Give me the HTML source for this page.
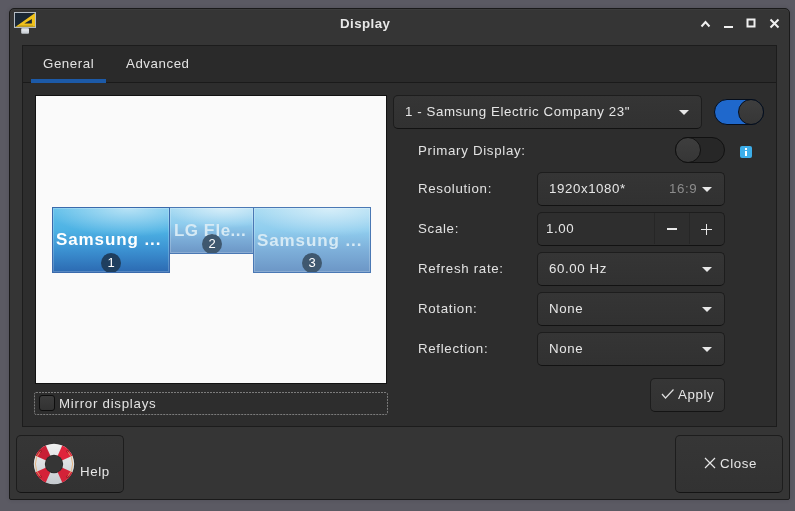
<!DOCTYPE html>
<html><head><meta charset="utf-8">
<style>
*{margin:0;padding:0;box-sizing:border-box}
html,body{width:795px;height:511px;overflow:hidden;background:#5b5a63;font-family:"Liberation Sans",sans-serif;font-size:13.3px;color:#e6e6e6}
.abs{position:absolute}
#root{position:absolute;left:0;top:0;width:795px;height:511px;will-change:transform}
#win{position:absolute;left:9px;top:8px;width:781px;height:492px;background:#353535;border:1px solid #1a1a1a;border-radius:5px 5px 2px 2px;box-shadow:0 0 4px rgba(0,0,0,0.12),inset 0 1px 0 rgba(255,255,255,0.04)}
#title{position:absolute;left:340px;top:16px;font-weight:bold;font-size:13.3px;letter-spacing:0.45px;color:#e8e8e8;line-height:16px}
#nb{position:absolute;left:22px;top:45px;width:755px;height:382px;background:#2d2d2d;border:1px solid #1c1c1c}
#tabsep{position:absolute;left:23px;top:82px;width:753px;height:1px;background:#1a1a1a}
#tabhdr{position:absolute;left:23px;top:46px;width:753px;height:36px;background:#2a2a2a}
.tab{position:absolute;line-height:16px;color:#e2e2e2;letter-spacing:0.55px!important}
#tabline{position:absolute;left:31px;top:79px;width:75px;height:4px;background:#1c5aa8}
#preview{position:absolute;left:35px;top:95px;width:352px;height:289px;background:#fafafa;border:1px solid #121212}
.lbl{position:absolute;left:418px;line-height:16px;color:#e2e2e2;letter-spacing:0.68px}
.combo{position:absolute;left:537px;width:188px;height:34px;background:linear-gradient(#353535,#313131);border:1px solid #1d1d1d;border-bottom-color:#121212;border-radius:5px}
.ctext{position:absolute;left:11px;top:8px;line-height:16px;color:#e6e6e6;letter-spacing:0.58px}
.arrow{position:absolute;left:164px;top:14px;width:0;height:0;border-left:5px solid transparent;border-right:5px solid transparent;border-top:5px solid #e8e8e8}
.btn{position:absolute;background:linear-gradient(#363636,#323232);border:1px solid #1d1d1d;border-bottom-color:#141414;border-radius:5px}
.mon{position:absolute;border:1px solid #2e62a8;overflow:hidden}
.badge{position:absolute;width:20px;height:20px;border-radius:50%;color:#fff;font-size:13px;text-align:center;line-height:20px}
.mtext{position:absolute;font-weight:bold;font-size:17px;letter-spacing:0.9px;line-height:18px;white-space:nowrap}
.m1{background:linear-gradient(#62c0ea 0%,#4db2e4 35%,#3c92d2 65%,#2c6ab2 100%);border-color:#3a6aac}
.m2{background:linear-gradient(#a6daf2 0%,#8fcdee 35%,#7eb0da 65%,#6c96c6 100%);border-color:#4a78b4}
.gl{position:absolute;left:0;top:0;width:100%;height:100%;background:radial-gradient(ellipse 70% 45% at 65% 0%,rgba(255,255,255,0.55),rgba(255,255,255,0) 100%);box-shadow:inset 0 0 0 1px rgba(255,255,255,0.2)}
</style></head><body><div id="root">
<div id="win"></div>
<!-- app icon -->
<svg class="abs" style="left:14px;top:12px" width="23" height="23" viewBox="0 0 23 23">
  <defs><linearGradient id="st" x1="0" y1="0" x2="0" y2="1"><stop offset="0" stop-color="#aeb6be"/><stop offset="0.3" stop-color="#e4e8ec"/><stop offset="1" stop-color="#c0c6cc"/></linearGradient></defs>
  <rect x="7.2" y="16" width="7.8" height="5.8" rx="1" fill="url(#st)"/>
  <rect x="0" y="0" width="22" height="16" fill="#b4bcc4"/>
  <rect x="1" y="1" width="20" height="13.8" fill="#1a2734"/>
  <polygon points="21,1 21,14.8 1.6,14.8" fill="#f0c21c"/>
  <polygon points="17.9,7 17.9,11.4 10.3,11.4" fill="#1a2734"/>
  <path d="M6,14.2 v-0.9 M8,14.2 v-0.9 M10,14.2 v-0.9 M12,14.2 v-0.9 M14,14.2 v-0.9 M16,14.2 v-0.9 M18,14.2 v-0.9" stroke="#7a5e10" stroke-width="0.7"/>
</svg>
<div id="title">Display</div>
<!-- window controls -->
<svg class="abs" style="left:698px;top:16px" width="86" height="16" viewBox="0 0 86 16">
  <polyline points="3.5,10.5 7.5,6 11.5,10.5" fill="none" stroke="#f0f0f0" stroke-width="2"/>
  <rect x="26" y="10" width="9" height="2" fill="#f0f0f0"/>
  <rect x="49.5" y="3.5" width="7" height="7" fill="none" stroke="#f0f0f0" stroke-width="2"/>
  <path d="M72.5,3.5 L80.5,11.5 M80.5,3.5 L72.5,11.5" stroke="#f0f0f0" stroke-width="2"/>
</svg>

<div id="nb"></div>
<div id="tabhdr"></div>
<div id="tabsep"></div>
<div class="tab" style="left:43px;top:56px;letter-spacing:0.5px">General</div>
<div class="tab" style="left:126px;top:56px;letter-spacing:0.5px">Advanced</div>
<div id="tabline"></div>

<div id="preview"></div>
<!-- monitors -->
<div class="mon m2" style="left:253px;top:207px;width:118px;height:66px">
  <div class="gl"></div>
  <div class="mtext" style="left:3px;top:23.5px;color:#d6eaf5">Samsung ...</div>
  <div class="badge" style="left:48px;top:44.5px;background:#3f586f">3</div>
</div>
<div class="mon m2" style="left:169px;top:207px;width:85px;height:47px">
  <div class="gl"></div>
  <div class="mtext" style="left:4px;top:14px;color:#d6eaf5;letter-spacing:0.45px">LG Ele...</div>
  <div class="badge" style="left:32px;top:26px;background:#3f586f">2</div>
</div>
<div class="mon m1" style="left:52px;top:207px;width:118px;height:66px">
  <div class="gl"></div>
  <div class="mtext" style="left:3px;top:23px;color:#ffffff">Samsung ...</div>
  <div class="badge" style="left:48px;top:44.5px;background:#1f3f5f">1</div>
</div>
<!-- mirror -->
<svg class="abs" style="left:0;top:0" width="795" height="511"><rect x="34.5" y="392.5" width="353" height="22" rx="1.5" fill="none" stroke="#7c7c7c" stroke-width="1" stroke-dasharray="2 1"/></svg>
<div class="abs" style="left:39px;top:395px;width:16px;height:16px;border:1.5px solid #0e0e0e;border-radius:3px;background:linear-gradient(#3c3c3c,#323232)"></div>
<div class="abs" style="left:59px;top:396px;line-height:16px;letter-spacing:0.73px;color:#e2e2e2">Mirror displays</div>

<!-- display selector -->
<div class="combo" style="left:393px;top:95px;width:309px;height:34px">
  <div class="ctext">1 - Samsung Electric Company 23"</div>
  <div class="arrow" style="left:285px"></div>
</div>
<!-- toggle on -->
<div class="abs" style="left:714px;top:99px;width:50px;height:26px;border-radius:13px;background:#1f68cc;border:1px solid #050e1c"></div>
<div class="abs" style="left:738px;top:99px;width:26px;height:26px;border-radius:50%;background:linear-gradient(#3e3e3e,#363636);border:1px solid #050e1c"></div>

<div class="lbl" style="top:143px">Primary Display:</div>
<!-- toggle off -->
<div class="abs" style="left:675px;top:137px;width:50px;height:26px;border-radius:13px;background:#272727;border:1px solid #111111"></div>
<div class="abs" style="left:675px;top:137px;width:26px;height:26px;border-radius:50%;background:linear-gradient(#3e3e3e,#363636);border:1px solid #111111"></div>
<!-- info -->
<div class="abs" style="left:740px;top:146px;width:12px;height:12px;border-radius:2px;background:#3daee9"></div>
<div class="abs" style="left:745px;top:148px;width:2px;height:2px;background:#fff"></div>
<div class="abs" style="left:745px;top:151px;width:2px;height:5px;background:#fff"></div>

<div class="lbl" style="top:181px">Resolution:</div>
<div class="combo" style="top:172px">
  <div class="ctext">1920x1080*</div>
  <div class="ctext" style="left:131px;color:#8c8c8c">16:9</div>
  <div class="arrow"></div>
</div>

<div class="lbl" style="top:221px">Scale:</div>
<div class="combo" style="top:212px;background:#2e2e2e">
  <div class="ctext" style="left:8px">1.00</div>
  <div class="abs" style="left:116px;top:0;width:1px;height:31px;background:#262626"></div>
  <div class="abs" style="left:151px;top:0;width:1px;height:31px;background:#262626"></div>
  <div class="abs" style="left:129px;top:15px;width:10px;height:2px;background:#e8e8e8"></div>
  <div class="abs" style="left:163px;top:16px;width:11px;height:1px;background:#e8e8e8"></div>
  <div class="abs" style="left:168px;top:11px;width:1px;height:11px;background:#e8e8e8"></div>
</div>

<div class="lbl" style="top:261px">Refresh rate:</div>
<div class="combo" style="top:252px">
  <div class="ctext">60.00 Hz</div>
  <div class="arrow"></div>
</div>

<div class="lbl" style="top:301px">Rotation:</div>
<div class="combo" style="top:292px">
  <div class="ctext">None</div>
  <div class="arrow"></div>
</div>

<div class="lbl" style="top:341px">Reflection:</div>
<div class="combo" style="top:332px">
  <div class="ctext">None</div>
  <div class="arrow"></div>
</div>

<!-- apply -->
<div class="btn" style="left:650px;top:378px;width:75px;height:34px"></div>
<svg class="abs" style="left:660px;top:388px" width="16" height="12" viewBox="0 0 16 12">
  <polyline points="2,6 5.5,10 13.5,1.5" fill="none" stroke="#dedede" stroke-width="1.2"/>
</svg>
<div class="abs" style="left:678px;top:387px;line-height:16px;letter-spacing:0.6px;color:#e6e6e6">Apply</div>

<!-- help -->
<div class="btn" style="left:16px;top:435px;width:108px;height:58px"></div>
<svg class="abs" style="left:32px;top:442px" width="44" height="44" viewBox="0 0 44 44">
  <defs>
    <linearGradient id="wg" x1="0" y1="0" x2="0" y2="1"><stop offset="0" stop-color="#f0f0f0"/><stop offset="0.5" stop-color="#dcdfe2"/><stop offset="1" stop-color="#c4c9ce"/></linearGradient>
  </defs>
  <circle cx="22" cy="22" r="20.8" fill="#262626" opacity="0.5"/>
  <circle cx="22" cy="22" r="20.2" fill="url(#wg)"/>
  <path d="M22,22 L30.22,3.55 A20.2,20.2 0 0 1 40.45,13.78 Z" fill="#e0243c"/><path d="M22,22 L40.45,30.22 A20.2,20.2 0 0 1 30.22,40.45 Z" fill="#d42238"/><path d="M22,22 L13.78,40.45 A20.2,20.2 0 0 1 3.55,30.22 Z" fill="#d42238"/><path d="M22,22 L3.55,13.78 A20.2,20.2 0 0 1 13.78,3.55 Z" fill="#c81f35"/>
  <path d="M35.60,9.31 A18.6,18.6 0 0 1 35.60,34.69 M8.40,34.69 A18.6,18.6 0 0 1 8.40,9.31" fill="none" stroke="#e6a868" stroke-width="0.8"/>
  <circle cx="35.60" cy="9.31" r="1" fill="none" stroke="#7a1420" stroke-width="0.6"/><circle cx="35.60" cy="34.69" r="1" fill="none" stroke="#7a1420" stroke-width="0.6"/><circle cx="8.40" cy="34.69" r="1" fill="none" stroke="#7a1420" stroke-width="0.6"/><circle cx="8.40" cy="9.31" r="1" fill="none" stroke="#7a1420" stroke-width="0.6"/>
  <circle cx="22" cy="22" r="9.2" fill="#2a2a2a"/>
  <circle cx="22" cy="22" r="8.4" fill="#353535"/>
</svg>
<div class="abs" style="left:80px;top:464px;line-height:16px;letter-spacing:0.6px;color:#e6e6e6">Help</div>

<!-- close -->
<div class="btn" style="left:675px;top:435px;width:108px;height:58px"></div>
<svg class="abs" style="left:704px;top:457px" width="12" height="12" viewBox="0 0 12 12">
  <path d="M1,1 L11,11 M11,1 L1,11" stroke="#e6e6e6" stroke-width="1.2"/>
</svg>
<div class="abs" style="left:720px;top:456px;line-height:16px;letter-spacing:0.6px;color:#e6e6e6">Close</div>
</div></body></html>
